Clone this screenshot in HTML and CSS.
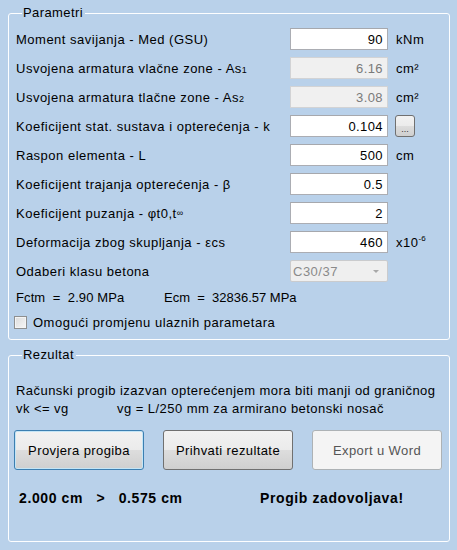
FILE: index.html
```html
<!DOCTYPE html>
<html>
<head>
<meta charset="utf-8">
<link rel="stylesheet" href="styles.css">
</head>
<body>
<div class="window">
  <fieldset class="group params">
    <legend>Parametri</legend>
    <div class="row">
      <span class="lbl">Moment savijanja - Med (GSU)</span>
      <input class="tb" type="text" value="90">
      <span class="unit">kNm</span>
    </div>
    <div class="row">
      <span class="lbl">Usvojena armatura vlačne zone - As<span class="sub">1</span></span>
      <input class="tb dis" type="text" value="6.16" disabled>
      <span class="unit">cm²</span>
    </div>
    <div class="row">
      <span class="lbl">Usvojena armatura tlačne zone - As<span class="sub">2</span></span>
      <input class="tb dis" type="text" value="3.08" disabled>
      <span class="unit">cm²</span>
    </div>
    <div class="row">
      <span class="lbl">Koeficijent stat. sustava i opterećenja - k</span>
      <input class="tb" type="text" value="0.104">
      <span class="unit"><button class="dots">...</button></span>
    </div>
    <div class="row">
      <span class="lbl">Raspon elementa - L</span>
      <input class="tb" type="text" value="500">
      <span class="unit">cm</span>
    </div>
    <div class="row">
      <span class="lbl">Koeficijent trajanja opterećenja - β</span>
      <input class="tb" type="text" value="0.5">
      <span class="unit"></span>
    </div>
    <div class="row">
      <span class="lbl">Koeficijent puzanja - φt0,t<span class="inf">∞</span></span>
      <input class="tb" type="text" value="2">
      <span class="unit"></span>
    </div>
    <div class="row">
      <span class="lbl">Deformacija zbog skupljanja - εcs</span>
      <input class="tb" type="text" value="460">
      <span class="unit">x10<sup class="exp">-6</sup></span>
    </div>
    <div class="row row-combo">
      <span class="lbl">Odaberi klasu betona</span>
      <div class="combo"><span>C30/37</span><span class="arrow"></span></div>
      <span class="unit"></span>
    </div>
    <div class="props">
      <span class="fctm">Fctm  =  2.90 MPa</span>
      <span class="ecm">Ecm  =  32836.57 MPa</span>
    </div>
    <label class="check"><span class="box"></span>Omogući promjenu ulaznih parametara</label>
  </fieldset>

  <fieldset class="group result">
    <legend>Rezultat</legend>
    <p class="desc">Računski progib izazvan opterećenjem mora biti manji od graničnog<br><span class="vk">vk &lt;= vg</span>vg = L/250 mm za armirano betonski nosač</p>
    <div class="buttons">
      <button class="btn focus">Provjera progiba</button>
      <button class="btn">Prihvati rezultate</button>
      <button class="btn off">Export u Word</button>
    </div>
    <div class="outcome">
      <span class="cmp">2.000 cm   &gt;   0.575 cm</span>
      <span class="verdict">Progib zadovoljava!</span>
    </div>
  </fieldset>
</div>
</body>
</html>
```
FILE: styles.css
```css
* { box-sizing: border-box; }
html, body {
  margin: 0;
  background: #b9d1ea;
}
body {
  font-family: "Liberation Sans", Arial, sans-serif;
  font-size: 13px;
  letter-spacing: 0.5px;
  color: #000;
  width: 457px;
  height: 550px;
  overflow: hidden;
}
.window {
  padding: 5px 7px 0 8px;
  display: flex;
  flex-direction: column;
  gap: 7px;
}
.group {
  margin: 0;
  border: 1px solid #fdfeff;
  border-radius: 3px;
  padding: 0 6px 0 7px;
  min-width: 0;
}
.group legend {
  padding: 0 2px 0 1px;
  margin-left: 6px;
  line-height: 16px;
  letter-spacing: 0.4px;
}
.params {
  height: 335px;
  padding-top: 7px;
}
.row {
  display: grid;
  grid-template-columns: 274px 98px auto;
  align-items: center;
  height: 22px;
  margin-bottom: 7px;
}
.row-combo { margin-bottom: 4px; }
.lbl { white-space: nowrap; }
.sub { font-size: 9px; letter-spacing: 0; }
.inf { font-size: 9px; letter-spacing: 0; position: relative; top: -2px; }
.exp { font-size: 8px; letter-spacing: 0; vertical-align: 6px; line-height: 0; }
.tb {
  width: 98px;
  height: 22px;
  border: 1px solid #abadb3;
  border-top-color: #a6a8ad;
  background: #fff;
  text-align: right;
  padding: 0 4px 0 2px;
  font: inherit;
  letter-spacing: 0.4px;
  color: #000;
  margin: 0;
}
.tb.dis {
  background: #f0f0f0;
  border-color: #d2d3d5;
  color: #7a7a7a;
}
.unit {
  padding-left: 8px;
  white-space: nowrap;
}
.dots {
  width: 20px;
  height: 22px;
  margin: 0 0 0 -1px;
  padding: 0 0 2px;
  border: 1px solid #707070;
  border-radius: 3px;
  background: linear-gradient(#f2f2f2, #ebebeb 50%, #dddddd 51%, #cfcfcf);
  font: 9px "Liberation Sans", Arial, sans-serif;
  letter-spacing: 0;
  color: #333;
  display: flex;
  align-items: flex-end;
  justify-content: center;
}
.combo {
  width: 98px;
  height: 22px;
  border: 1px solid #cacbcd;
  border-radius: 2px;
  background: #efefef;
  color: #8a8a8a;
  display: flex;
  align-items: center;
  justify-content: space-between;
  padding: 0 8px 0 2px;
}
.arrow {
  width: 0;
  height: 0;
  border-left: 3px solid transparent;
  border-right: 3px solid transparent;
  border-top: 3px solid #a8a8a8;
}
.props {
  height: 22px;
  display: flex;
  align-items: center;
  white-space: pre;
  letter-spacing: 0.1px;
  margin-top: 1px;
}
.fctm { width: 148px; }
.ecm { letter-spacing: 0; }
.check {
  display: flex;
  align-items: center;
  height: 22px;
  margin-left: -2px;
  margin-top: 3px;
}
.box {
  width: 13px;
  height: 13px;
  border: 1px solid #8e8f8f;
  background: linear-gradient(135deg, #dcdcdc, #f6f6f6);
  box-shadow: inset 0 0 0 1px #f4f4f4;
  margin-right: 6px;
}
.result {
  height: 195px;
  padding-top: 19px;
}
.desc {
  margin: 0;
  line-height: 18px;
  letter-spacing: 0.45px;
}
.vk {
  display: inline-block;
  width: 101px;
}
.buttons {
  display: flex;
  gap: 19px;
  margin: 12px 0 0 -2px;
}
.btn {
  width: 130px;
  height: 40px;
  border: 1px solid #707070;
  border-radius: 3px;
  background: linear-gradient(#f2f2f2, #ebebeb 50%, #dddddd 51%, #cfcfcf);
  font: 13px "Liberation Sans", Arial, sans-serif;
  letter-spacing: 0.4px;
  color: #000;
  margin: 0;
  padding: 0;
}
.btn.focus {
  border-color: #3c7fb1;
  box-shadow: inset 0 0 0 1px #c4e5f6;
}
.btn.off {
  border-color: #adb2b5;
  background: #f4f4f4;
  color: #555;
}
.outcome {
  display: flex;
  align-items: center;
  height: 20px;
  margin-top: 18px;
  padding-left: 3px;
  font-weight: bold;
  font-size: 14px;
  letter-spacing: 0.6px;
  white-space: pre;
}
.cmp { width: 241px; }
```
